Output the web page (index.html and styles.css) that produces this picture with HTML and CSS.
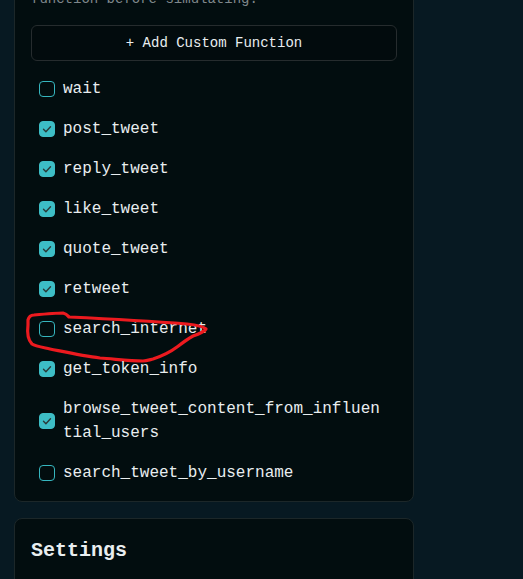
FILE: index.html
```html
<!DOCTYPE html>
<html lang="en">
<head>
<meta charset="utf-8">
<title>Functions</title>
<link rel="stylesheet" href="styles.css">
</head>
<body>
<div class="page">
  <section class="card functions">
    <p class="desc">Pick the tools the agent may call, or add a<br>function before simulating.</p>
    <button class="add-btn" type="button">+ Add Custom Function</button>
    <ul class="fn-list">
      <li><label class="fn"><span class="cb"></span><span class="name">wait</span></label></li>
      <li><label class="fn"><span class="cb checked"><svg viewBox="0 0 16 16"><path d="M4.5 8.3l2.4 2.4 4.6-5"/></svg></span><span class="name">post_tweet</span></label></li>
      <li><label class="fn"><span class="cb checked"><svg viewBox="0 0 16 16"><path d="M4.5 8.3l2.4 2.4 4.6-5"/></svg></span><span class="name">reply_tweet</span></label></li>
      <li><label class="fn"><span class="cb checked"><svg viewBox="0 0 16 16"><path d="M4.5 8.3l2.4 2.4 4.6-5"/></svg></span><span class="name">like_tweet</span></label></li>
      <li><label class="fn"><span class="cb checked"><svg viewBox="0 0 16 16"><path d="M4.5 8.3l2.4 2.4 4.6-5"/></svg></span><span class="name">quote_tweet</span></label></li>
      <li><label class="fn"><span class="cb checked"><svg viewBox="0 0 16 16"><path d="M4.5 8.3l2.4 2.4 4.6-5"/></svg></span><span class="name">retweet</span></label></li>
      <li class="marked"><label class="fn"><span class="cb"></span><span class="name">search_internet</span></label>
        <svg class="scribble" viewBox="0 0 180 48" width="180" height="48"><path d="M-3 3 C-2 -1 0 -2 3 -2 C 14 -3 26 -4 32 -4 C 36 -3 37 -1 38 0 C 80 2 130 5 156 7 C 166 8 172 9 175 12 C 173 15 168 17 162 19 C 155 23 150 27 146 30 C 138 36 128 40 122 42 C 118 43 115 44 112 44 C 98 44 84 42 69 41 C 52 39 34 35 19 32 C 10 30 4 29 1 27 C -3 23 -4 16 -3 8 Z"/></svg>
      </li>
      <li><label class="fn"><span class="cb checked"><svg viewBox="0 0 16 16"><path d="M4.5 8.3l2.4 2.4 4.6-5"/></svg></span><span class="name">get_token_info</span></label></li>
      <li><label class="fn"><span class="cb checked"><svg viewBox="0 0 16 16"><path d="M4.5 8.3l2.4 2.4 4.6-5"/></svg></span><span class="name">browse_tweet_content_from_influential_users</span></label></li>
      <li><label class="fn"><span class="cb"></span><span class="name">search_tweet_by_username</span></label></li>
    </ul>
  </section>
  <section class="card settings">
    <h2>Settings</h2>
  </section>
</div>
</body>
</html>
```

FILE: styles.css
```css
html, body {
  margin: 0;
  padding: 0;
  background: #071922;
}
body {
  font-family: "Liberation Mono", "Courier New", monospace;
  color: #e9eef0;
  overflow: hidden;
}
.page {
  display: flex;
  flex-direction: column;
  gap: 16px;
  width: 400px;
  margin: -48px 0 0 14px;
}
.card {
  background: #020d0f;
  border: 1px solid #1c2729;
  border-radius: 8px;
  padding: 16px;
}
.functions {
  display: flex;
  flex-direction: column;
  gap: 16px;
}
.desc {
  margin: 0;
  font-size: 14px;
  line-height: 20px;
  color: #7f878b;
}
.add-btn {
  height: 36px;
  border: 1px solid #262c2e;
  border-radius: 6px;
  background: #020b0d;
  color: #e9eef0;
  font-family: "Liberation Mono", "Courier New", monospace;
  font-size: 14px;
  padding: 0;
}
.fn-list {
  list-style: none;
  margin: 0;
  padding: 0;
  display: flex;
  flex-direction: column;
  gap: 16px;
}
.fn-list li {
  position: relative;
}
.fn {
  display: flex;
  align-items: center;
  gap: 8px;
  padding: 0 8px;
  font-size: 16px;
  line-height: 24px;
}
.name {
  word-break: break-all;
  min-width: 0;
}
.cb {
  flex: 0 0 16px;
  width: 16px;
  height: 16px;
  box-sizing: border-box;
  border: 1.5px solid #36b6bf;
  border-radius: 4px;
  display: flex;
}
.cb.checked {
  background: #3dbdc5;
  border-color: #3dbdc5;
}
.cb svg {
  width: 16px;
  height: 16px;
  margin: -1.5px;
}
.cb svg path {
  fill: none;
  stroke: #2b3a38;
  stroke-width: 1.4;
  stroke-linecap: round;
  stroke-linejoin: round;
}
.scribble {
  position: absolute;
  left: 0;
  top: 0;
  overflow: visible;
  pointer-events: none;
}
.scribble path {
  fill: none;
  stroke: #ec1a1f;
  stroke-width: 3.2;
  stroke-linejoin: round;
  stroke-linecap: round;
}
.settings h2 {
  margin: 0;
  font-size: 20px;
  line-height: 32px;
  font-weight: 700;
  padding-bottom: 40px;
}
```
